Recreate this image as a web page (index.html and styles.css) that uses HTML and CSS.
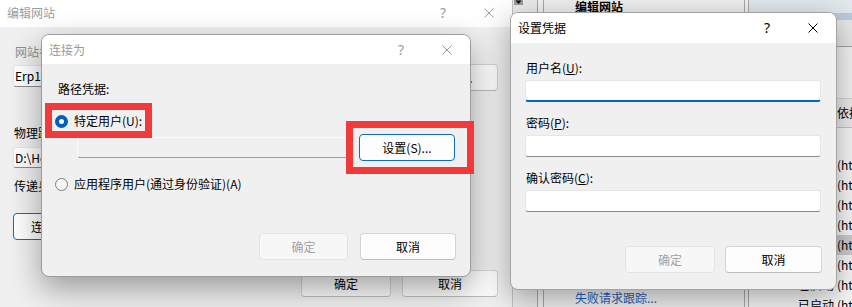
FILE: index.html
```html
<!DOCTYPE html>
<html lang="zh-CN">
<head>
<meta charset="utf-8">
<title>连接为</title>
<link rel="stylesheet" href="styles.css">
</head>
<body>
<div class="desktop">

  <div class="iis">
    <div class="pane-left">
      <svg class="scroll-arrow" width="9" height="5" viewBox="0 0 9 5"><rect width="9" height="5" fill="#9a9a9a"/><path d="M1.5 0.5H7.5L4.5 4Z" fill="#111"/></svg>
    </div>
    <div class="splitter"></div>
    <div class="pane-actions">
      <div class="act-title">编辑网站</div>
      <div class="act-link">失败请求跟踪...</div>
    </div>
    <div class="splitter narrow"></div>
    <div class="pane-list">
      <div class="pl-top"></div>
      <div class="pl-band"></div>
      <div class="pl-toolbar"></div>
      <div class="pl-space"></div>
      <div class="pl-header"><span class="c-status"></span><span class="c-bind">依据</span></div>
      <div class="pl-rows">
        <div class="pl-row"><span class="c-status">已启动</span><span class="c-bind">(http/*:80)</span></div>
        <div class="pl-row"><span class="c-status">已启动</span><span class="c-bind">(http/*:81)</span></div>
        <div class="pl-row"><span class="c-status">已启动</span><span class="c-bind">(http/*:82)</span></div>
        <div class="pl-row"><span class="c-status">已启动</span><span class="c-bind">(http/*:83)</span></div>
        <div class="pl-row sel"><span class="c-status">已启动</span><span class="c-bind">(http/*:84)</span></div>
        <div class="pl-row"><span class="c-status">已启动</span><span class="c-bind">(http/*:85)</span></div>
        <div class="pl-row"><span class="c-status">已启动</span><span class="c-bind">(http/*:86)</span></div>
        <div class="pl-row"><span class="c-status">已启动</span><span class="c-bind">(http/*:87)</span></div>
      </div>
    </div>
  </div>

  <div class="win win-edit">
    <div class="titlebar tb-edit">
      <span class="title">编辑网站</span>
      <span class="tb-btn tb-help">?</span>
      <span class="tb-btn"><svg width="10" height="10" viewBox="0 0 10 10"><path d="M0.5 0.5L9.5 9.5M9.5 0.5L0.5 9.5" stroke="currentColor" stroke-width="1" fill="none"/></svg></span>
    </div>
    <div class="edit-body">
      <div class="lbl lbl-dim e-l1">网站名称(S):</div>
      <div class="e-row1">
        <div class="tbox e-site">Erp1</div>
        <div class="btn e-pick">选择(E)...</div>
      </div>
      <div class="lbl e-l2">物理路径(P):</div>
      <div class="tbox e-path">D:\HostSite\Erp1</div>
      <div class="lbl e-l3">传递身份验证</div>
      <div class="e-row3">
        <div class="btn btn-focus e-connect">连接为(C)...</div>
        <div class="btn e-test">测试设置(G)...</div>
      </div>
      <div class="footer e-footer">
        <div class="btn w90">确定</div>
        <div class="btn w96">取消</div>
      </div>
    </div>
  </div>

  <div class="win win-connect">
    <div class="titlebar tb-connect">
      <span class="title">连接为</span>
      <span class="tb-btn tb-help">?</span>
      <span class="tb-btn"><svg width="10" height="10" viewBox="0 0 10 10"><path d="M0.5 0.5L9.5 9.5M9.5 0.5L0.5 9.5" stroke="currentColor" stroke-width="1" fill="none"/></svg></span>
    </div>
    <div class="dlg-body connect-body">
      <div class="lbl c-l1">路径凭据:</div>
      <div class="radio-row c-r1"><span class="radio on"></span><span>特定用户(U):</span></div>
      <div class="cred-row">
        <div class="tbox disabled c-user"></div>
        <div class="btn btn-focus c-set">设置(S)...</div>
      </div>
      <div class="radio-row c-r2"><span class="radio off"></span><span>应用程序用户(通过身份验证)(A)</span></div>
      <div class="footer c-footer">
        <div class="btn btn-disabled w89">确定</div>
        <div class="btn w96">取消</div>
      </div>
    </div>
  </div>

  <div class="win win-creds">
    <div class="titlebar tb-creds">
      <span class="title">设置凭据</span>
      <span class="tb-btn tb-help">?</span>
      <span class="tb-btn"><svg width="10" height="10" viewBox="0 0 10 10"><path d="M0.5 0.5L9.5 9.5M9.5 0.5L0.5 9.5" stroke="currentColor" stroke-width="1" fill="none"/></svg></span>
    </div>
    <div class="dlg-body creds-body">
      <div class="lbl s-l1">用户名(<u>U</u>):</div>
      <div class="tbox focus s-in"></div>
      <div class="lbl s-l">密码(<u>P</u>):</div>
      <div class="tbox s-in"></div>
      <div class="lbl s-l">确认密码(<u>C</u>):</div>
      <div class="tbox s-in"></div>
      <div class="footer s-footer">
        <div class="btn btn-disabled w90">确定</div>
        <div class="btn w97">取消</div>
      </div>
    </div>
  </div>

  <div class="hl hl-user"></div>
  <div class="hl hl-set"></div>
</div>
</body>
</html>
```

FILE: styles.css
```css
* { box-sizing: border-box; }
html, body { margin: 0; padding: 0; }
body {
  width: 852px;
  height: 307px;
  overflow: hidden;
  background: #f0f0f0;
  font-family: "Noto Sans CJK SC", "Noto Sans", sans-serif;
  font-size: 12px;
  line-height: 16px;
  color: #000;
}
.desktop { position: relative; width: 852px; height: 307px; overflow: hidden; }

/* ---------- background manager window ---------- */
.iis { position: absolute; left: 0; top: 0; width: 852px; height: 307px; display: flex; z-index: 0; }
.pane-left {
  width: 537px; flex: none; background: #ebebeb;
  display: flex; justify-content: flex-end; align-items: flex-start; padding-right: 14px;
}
.scroll-arrow { display: block; }
.splitter { width: 7px; flex: none; border-left: 1px solid #a9a9a9; border-right: 1px solid #a9a9a9; background: #f2f2f2; }
.splitter.narrow { width: 5px; }
.pane-actions {
  width: 200px; flex: none; background: #f0f0f0;
  display: flex; flex-direction: column; justify-content: space-between;
  padding: 0 0 1px 31px;
}
.act-title { font-weight: 700; line-height: 14px; white-space: nowrap; }
.act-link { color: #1f5fb8; white-space: nowrap; }
.pane-list { flex: 1; display: flex; flex-direction: column; background: #f7f7f7; overflow: hidden; }
.pane-list > * { flex: none; }
.pl-top { height: 13px; background: #e3e8ef; }
.pl-band { height: 7px; background: #bccbdd; }
.pl-toolbar { height: 27px; background: #e8e8e8; border-bottom: 1px solid #a5a5a5; }
.pl-space { height: 51px; background: #f3f3f3; }
.pl-header {
  height: 30px; display: flex; align-items: center; padding-left: 49px;
  background: #ebebeb; border-top: 1px solid #d3d3d3; border-bottom: 1px solid #c6c6c6;
  white-space: nowrap;
}
.pl-rows { padding-top: 27px; }
.pl-row { height: 20px; display: flex; align-items: center; padding-left: 49px; white-space: nowrap; }
.pl-row.sel { background: #cccccc; }
.c-status { width: 39px; flex: none; }

/* ---------- windows ---------- */
.win { position: absolute; background: #f0f0f0; display: flex; flex-direction: column; }
.titlebar { display: flex; align-items: center; background: #fff; flex: none; }
.title { flex: 1; padding-left: 7px; white-space: nowrap; }
.tb-btn { width: 46px; flex: none; display: flex; justify-content: center; align-items: center; }
.tb-btn svg { display: block; }
.tb-help { font-family: "Noto Sans", sans-serif; font-size: 14px; }

.win-edit { left: 0; top: 0; width: 513px; height: 330px; border-right: 1px solid #c2c2c2; z-index: 1; }
.tb-edit { height: 27px; padding-bottom: 2px; color: #9d9d9d; }
.win-connect {
  left: 41px; top: 34px; width: 430px; height: 243px; z-index: 2;
  border: 1px solid #9c9c9c; border-radius: 8px; overflow: hidden;
  box-shadow: 0 12px 32px rgba(0, 0, 0, 0.36);
}
.tb-connect { height: 29px; color: #9a9a9a; }
.win-creds {
  left: 510px; top: 12px; width: 327px; height: 278px; z-index: 3;
  border: 1px solid #a3a3a3; border-radius: 8px; overflow: hidden;
  box-shadow: 0 8px 30px rgba(0, 0, 0, 0.34);
}
.tb-creds { height: 30px; color: #000; }

/* ---------- controls ---------- */
.lbl { white-space: nowrap; }
.lbl-dim { color: #8f8f8f; }
.btn {
  height: 27px; flex: none;
  display: flex; align-items: center; justify-content: center;
  background: #fdfdfd; border: 1px solid #d3d3d3; border-bottom-color: #bcbcbc;
  border-radius: 4px; white-space: nowrap;
}
.btn-focus { border-color: #0f6cc4; }
.btn-disabled { background: #f7f7f7; border-color: #e4e4e4; color: #a3a3a3; }
.w89 { width: 89px; }
.w90 { width: 90px; }
.w96 { width: 96px; }
.w97 { width: 97px; }
.tbox {
  height: 22px; display: flex; align-items: center; padding: 0 1px;
  background: #fff; border: 1px solid #e6e6e6; border-bottom-color: #8c8c8c; border-radius: 3px;
  white-space: nowrap; overflow: hidden;
}
.tbox.focus { border-bottom: 2px solid #0067c0; }
.tbox.disabled { background: #f0f0f0; border-color: #fbfbfb; border-bottom-color: #9c9c9c; }
.radio { width: 13px; height: 13px; border-radius: 50%; flex: none; }
.radio.on { border: 4px solid #005fb8; background: #fff; }
.radio.off { border: 1px solid #7e7e7e; background: #f6f6f6; }
.footer { display: flex; justify-content: flex-end; }

/* ---------- edit site dialog content ---------- */
.edit-body { flex: 1; display: flex; flex-direction: column; padding: 0 14px 0 13px; }
.edit-body > * { flex: none; }
.e-l1 { margin-top: 17px; padding-left: 2px; }
.e-row1 { margin-top: 4px; display: flex; align-items: flex-start; }
.e-site { width: 300px; margin-top: 1px; }
.e-pick { width: 100px; margin-left: auto; }
.e-l2 { margin-top: 34px; padding-left: 1px; }
.e-path { margin-top: 6px; width: 400px; height: 21px; }
.e-l3 { margin-top: 10px; padding-left: 1px; }
.e-row3 { margin-top: 19px; display: flex; gap: 10px; }
.e-connect { width: 98px; }
.e-test { width: 106px; }
.e-footer { margin-top: 30px; gap: 11px; }

/* ---------- connect-as dialog content ---------- */
.dlg-body { flex: 1; display: flex; flex-direction: column; }
.dlg-body > * { flex: none; }
.connect-body { padding: 0 14px 16px 13px; }
.c-l1 { margin-top: 17px; padding-left: 3px; }
.radio-row { height: 16px; display: flex; align-items: center; gap: 6px; white-space: nowrap; }
.c-r1 { margin-top: 16px; }
.cred-row { margin-top: 5px; margin-left: 22px; display: flex; align-items: center; gap: 11px; }
.c-user { width: 271px; height: 21px; }
.c-set { width: 96px; }
.c-r2 { margin-top: 15px; }
.c-footer { margin-top: auto; gap: 12px; }

/* ---------- set credentials dialog content ---------- */
.creds-body { padding: 0 14px 16px 14px; }
.s-l1 { margin-top: 17px; padding-left: 1px; }
.s-l { margin-top: 13px; padding-left: 1px; }
.s-in { margin-top: 4px; margin-right: 1px; }
.s-footer { margin-top: auto; gap: 10px; }

/* ---------- red annotation boxes ---------- */
.hl { position: absolute; border: 7px solid #f23a3a; z-index: 5; }
.hl-user { left: 45px; top: 103px; width: 107px; height: 35px; }
.hl-set { left: 346px; top: 121px; width: 128px; height: 53px; }
```
